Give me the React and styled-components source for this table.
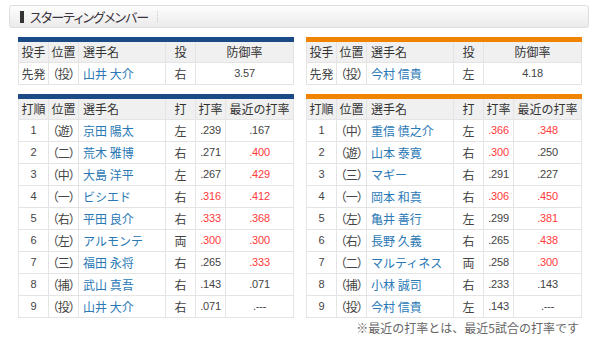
import React from 'react'
import styled, { createGlobalStyle } from 'styled-components'

const navy = '#1b4b87'
const orange = '#f08300'
const link = '#2a78b5'
const hot = '#ff3b3b'

const GlobalStyle = createGlobalStyle`
  html, body { margin:0; padding:0; background:#fff; }
  body {
    font-family:"Noto Sans CJK JP", "Liberation Sans", sans-serif;
    color:#333;
  }
`

const Page = styled.div`
  width:600px;
  height:345px;
  padding:5px 11px 0 9px;
  box-sizing:border-box;
`

const TitleBar = styled.div`
  height:23px;
  box-sizing:border-box;
  border:1px solid #dedede;
  border-radius:3px;
  background:linear-gradient(#fdfdfd, #ebebeb);
  display:flex;
  align-items:center;
  padding-left:10px;
  gap:6px;
`

const Marker = styled.span`
  width:4px;
  height:12px;
  background:#333;
`

const Title = styled.h2`
  margin:0;
  font-size:13px;
  font-weight:400;
  font-feature-settings:"palt";
  letter-spacing:-0.9px;
  color:#3a3340;
  line-height:1;
`

const Dots = styled.span`
  height:11px;
  border-left:1px dotted #c8c8c8;
  margin-left:3px;
`

const Columns = styled.div`
  display:flex;
  gap:13px;
  padding:9px 0 0 9px;
`

const Column = styled.div`
  width:275px;
  display:flex;
  flex-direction:column;
`

const Table = styled.table`
  width:275px;
  border-collapse:collapse;
  table-layout:fixed;
  border-top:5px solid ${p => p.$team};
  font-size:12px;
`

const Lineup = styled(Table)`
  margin-top:9px;
`

const Row = styled.tr`
  height:${p => (p.$head ? 23 : 22)}px;
`

const Head = styled.th`
  background:#f0f0f0;
  border:1px solid #e4e4e4;
  border-top:none;
  font-weight:400;
  padding:0;
  text-align:${p => p.$align || 'center'};
  padding-left:${p => (p.$align === 'left' ? '4px' : '0')};
  color:#333;
  white-space:nowrap;
  line-height:1;
`

const Cell = styled.td`
  border:1px solid #e4e4e4;
  padding:0;
  text-align:center;
  white-space:nowrap;
  line-height:1;
  color:#444;
`

const Pos = styled(Cell)`
  font-feature-settings:"palt";
  letter-spacing:-0.5px;
`

const Name = styled(Cell)`
  text-align:left;
  padding-left:4px;
  color:${link};
`

const Num = styled(Cell)`
  font-family:"Liberation Sans", sans-serif;
  font-size:11px;
  color:${p => (p.$hot ? hot : '#444')};
  letter-spacing:-0.2px;
`

const Note = styled.p`
  margin:1px 0 0;
  line-height:18px;
  text-align:right;
  font-size:12px;
  color:#666;
  padding-right:2px;
`

const Col = styled.col`
  width:${p => p.$w}px;
`

const widths = [30, 30, 87, 30, 30, 68]

const teams = [
  {
    color: navy,
    pitcher: { name: '山井 大介', hand: '右', era: '3.57' },
    lineup: [
      ['1', '遊', '京田 陽太', '左', '.239', '.167'],
      ['2', '二', '荒木 雅博', '右', '.271', '.400'],
      ['3', '中', '大島 洋平', '左', '.267', '.429'],
      ['4', '一', 'ビシエド', '右', '.316', '.412'],
      ['5', '右', '平田 良介', '右', '.333', '.368'],
      ['6', '左', 'アルモンテ', '両', '.300', '.300'],
      ['7', '三', '福田 永将', '右', '.265', '.333'],
      ['8', '捕', '武山 真吾', '右', '.143', '.071'],
      ['9', '投', '山井 大介', '右', '.071', '.---'],
    ],
  },
  {
    color: orange,
    pitcher: { name: '今村 信貴', hand: '左', era: '4.18' },
    lineup: [
      ['1', '中', '重信 慎之介', '左', '.366', '.348'],
      ['2', '遊', '山本 泰寛', '右', '.300', '.250'],
      ['3', '三', 'マギー', '右', '.291', '.227'],
      ['4', '一', '岡本 和真', '右', '.306', '.450'],
      ['5', '左', '亀井 善行', '左', '.299', '.381'],
      ['6', '右', '長野 久義', '右', '.265', '.438'],
      ['7', '二', 'マルティネス', '両', '.258', '.300'],
      ['8', '捕', '小林 誠司', '右', '.233', '.143'],
      ['9', '投', '今村 信貴', '左', '.143', '.---'],
    ],
  },
]

// .300 以上は赤字
const isHot = v => v !== '.---' && parseFloat(v) >= 0.3

const Cols = ({ span }) => (
  <colgroup>
    {span.map((w, i) => <Col key={i} $w={w} />)}
  </colgroup>
)

const PitcherTable = ({ team }) => (
  <Table $team={team.color}>
    <Cols span={[30, 30, 87, 30, 98]} />
    <thead>
      <Row $head>
        <Head>投手</Head>
        <Head>位置</Head>
        <Head $align="left">選手名</Head>
        <Head>投</Head>
        <Head>防御率</Head>
      </Row>
    </thead>
    <tbody>
      <Row>
        <Cell>先発</Cell>
        <Pos>（投）</Pos>
        <Name>{team.pitcher.name}</Name>
        <Cell>{team.pitcher.hand}</Cell>
        <Num>{team.pitcher.era}</Num>
      </Row>
    </tbody>
  </Table>
)

const LineupTable = ({ team }) => (
  <Lineup $team={team.color}>
    <Cols span={widths} />
    <thead>
      <Row $head>
        <Head>打順</Head>
        <Head>位置</Head>
        <Head $align="left">選手名</Head>
        <Head>打</Head>
        <Head>打率</Head>
        <Head>最近の打率</Head>
      </Row>
    </thead>
    <tbody>
      {team.lineup.map(([no, pos, name, hand, avg, recent]) => (
        <Row key={no}>
          <Num>{no}</Num>
          <Pos>（{pos}）</Pos>
          <Name>{name}</Name>
          <Cell>{hand}</Cell>
          <Num $hot={isHot(avg)}>{avg}</Num>
          <Num $hot={isHot(recent)}>{recent}</Num>
        </Row>
      ))}
    </tbody>
  </Lineup>
)

export default function App() {
  return (
    <Page>
      <GlobalStyle />
      <TitleBar>
        <Marker />
        <Title>スターティングメンバー</Title>
        <Dots />
      </TitleBar>
      <Columns>
        {teams.map((team, i) => (
          <Column key={i}>
            <PitcherTable team={team} />
            <LineupTable team={team} />
            {i === 1 && <Note>※最近の打率とは、最近5試合の打率です</Note>}
          </Column>
        ))}
      </Columns>
    </Page>
  )
}
